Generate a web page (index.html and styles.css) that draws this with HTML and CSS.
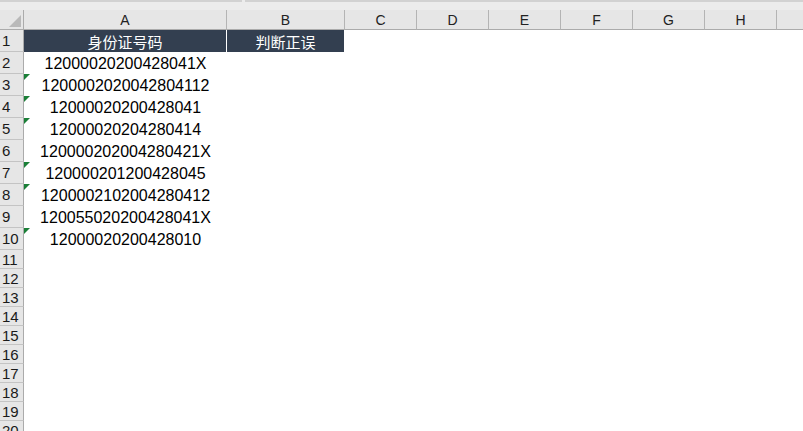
FILE: index.html
```html
<!DOCTYPE html>
<html lang="zh">
<head>
<meta charset="utf-8">
<link rel="stylesheet" href="styles.css">
</head>
<body>
<div class="topstrip"><span class="seg seg1"></span><span class="seg seg2"></span></div>
<div class="sheet">
  <div class="corner"><span class="corner-tri"></span></div>
  <div class="colh">A</div><div class="colh">B</div><div class="colh">C</div><div class="colh">D</div><div class="colh">E</div><div class="colh">F</div><div class="colh">G</div><div class="colh">H</div><div class="colh last"></div>

  <div class="rowh tall">1</div><div class="cell dark">身份证号码</div><div class="cell dark">判断正误</div><div class="cell"></div><div class="cell"></div><div class="cell"></div><div class="cell"></div><div class="cell"></div><div class="cell"></div><div class="cell"></div>

  <div class="rowh tall">2</div><div class="cell num">12000020200428041X</div><div class="cell"></div><div class="cell"></div><div class="cell"></div><div class="cell"></div><div class="cell"></div><div class="cell"></div><div class="cell"></div><div class="cell"></div>
  <div class="rowh tall">3</div><div class="cell num txt">1200002020042804112</div><div class="cell"></div><div class="cell"></div><div class="cell"></div><div class="cell"></div><div class="cell"></div><div class="cell"></div><div class="cell"></div><div class="cell"></div>
  <div class="rowh tall">4</div><div class="cell num txt">12000020200428041</div><div class="cell"></div><div class="cell"></div><div class="cell"></div><div class="cell"></div><div class="cell"></div><div class="cell"></div><div class="cell"></div><div class="cell"></div>
  <div class="rowh tall">5</div><div class="cell num txt">12000020204280414</div><div class="cell"></div><div class="cell"></div><div class="cell"></div><div class="cell"></div><div class="cell"></div><div class="cell"></div><div class="cell"></div><div class="cell"></div>
  <div class="rowh tall">6</div><div class="cell num">120000202004280421X</div><div class="cell"></div><div class="cell"></div><div class="cell"></div><div class="cell"></div><div class="cell"></div><div class="cell"></div><div class="cell"></div><div class="cell"></div>
  <div class="rowh tall">7</div><div class="cell num txt">120000201200428045</div><div class="cell"></div><div class="cell"></div><div class="cell"></div><div class="cell"></div><div class="cell"></div><div class="cell"></div><div class="cell"></div><div class="cell"></div>
  <div class="rowh tall">8</div><div class="cell num txt">1200002102004280412</div><div class="cell"></div><div class="cell"></div><div class="cell"></div><div class="cell"></div><div class="cell"></div><div class="cell"></div><div class="cell"></div><div class="cell"></div>
  <div class="rowh tall">9</div><div class="cell num">120055020200428041X</div><div class="cell"></div><div class="cell"></div><div class="cell"></div><div class="cell"></div><div class="cell"></div><div class="cell"></div><div class="cell"></div><div class="cell"></div>
  <div class="rowh tall">10</div><div class="cell num txt">12000020200428010</div><div class="cell"></div><div class="cell"></div><div class="cell"></div><div class="cell"></div><div class="cell"></div><div class="cell"></div><div class="cell"></div><div class="cell"></div>

  <div class="rowh">11</div><div class="cell span"></div>
  <div class="rowh">12</div><div class="cell span"></div>
  <div class="rowh">13</div><div class="cell span"></div>
  <div class="rowh">14</div><div class="cell span"></div>
  <div class="rowh">15</div><div class="cell span"></div>
  <div class="rowh">16</div><div class="cell span"></div>
  <div class="rowh">17</div><div class="cell span"></div>
  <div class="rowh">18</div><div class="cell span"></div>
  <div class="rowh">19</div><div class="cell span"></div>
  <div class="rowh">20</div><div class="cell span"></div>
</div>
</body>
</html>
```
FILE: styles.css
```css
html, body {
  margin: 0;
  padding: 0;
  background: #ffffff;
  overflow: hidden;
}
body {
  width: 803px;
  height: 431px;
  font-family: "Liberation Sans", Arial, "Noto Sans CJK SC", sans-serif;
}
.topstrip {
  height: 10px;
  background: #ececec;
  display: flex;
  box-sizing: border-box;
}
.seg {
  display: block;
  height: 2px;
  background: #d2d2d2;
}
.seg1 { width: 242px; }
.seg2 { flex: 1; margin-left: 3px; }
.sheet {
  display: grid;
  grid-template-columns: 24px 203px 118px repeat(6, 72px) 1fr;
  grid-template-rows: 20px repeat(10, 22px) repeat(10, 19px);
}
.corner {
  background: #e6e6e6;
  border-right: 1px solid #ababab;
  border-bottom: 1px solid #ababab;
  box-sizing: border-box;
  position: relative;
}
.corner-tri {
  position: absolute;
  right: 2px;
  bottom: 2px;
  width: 0;
  height: 0;
  border-left: 12px solid transparent;
  border-bottom: 12px solid #b9b9b9;
}
.colh {
  background: #e6e6e6;
  border-right: 1px solid #b4b4b4;
  border-bottom: 1px solid #ababab;
  box-sizing: border-box;
  font-size: 14px;
  color: #222;
  display: flex;
  align-items: center;
  justify-content: center;
  padding-top: 1px;
}
.colh.last { border-right: none; }
.rowh {
  background: #e6e6e6;
  border-right: 1px solid #ababab;
  border-bottom: 1px solid #c4c4c4;
  box-sizing: border-box;
  font-size: 15px;
  color: #1a1a1a;
  display: flex;
  align-items: center;
  padding-left: 2px;
}
.cell {
  box-sizing: border-box;
  position: relative;
  display: flex;
  align-items: center;
  justify-content: center;
  font-size: 16px;
  color: #000;
  white-space: nowrap;
}
.cell.span { grid-column: 2 / -1; }
.cell.dark {
  background: #333f50;
  color: #ffffff;
  border-right: 1px solid #ffffff;
  font-family: "Noto Sans CJK SC", "Liberation Sans", sans-serif;
  font-size: 15px;
}
.cell.num { padding-top: 1px; }
.cell.txt::before {
  content: "";
  position: absolute;
  left: 0;
  top: 0;
  width: 0;
  height: 0;
  border-top: 6px solid #1a7f37;
  border-right: 6px solid transparent;
}
```
